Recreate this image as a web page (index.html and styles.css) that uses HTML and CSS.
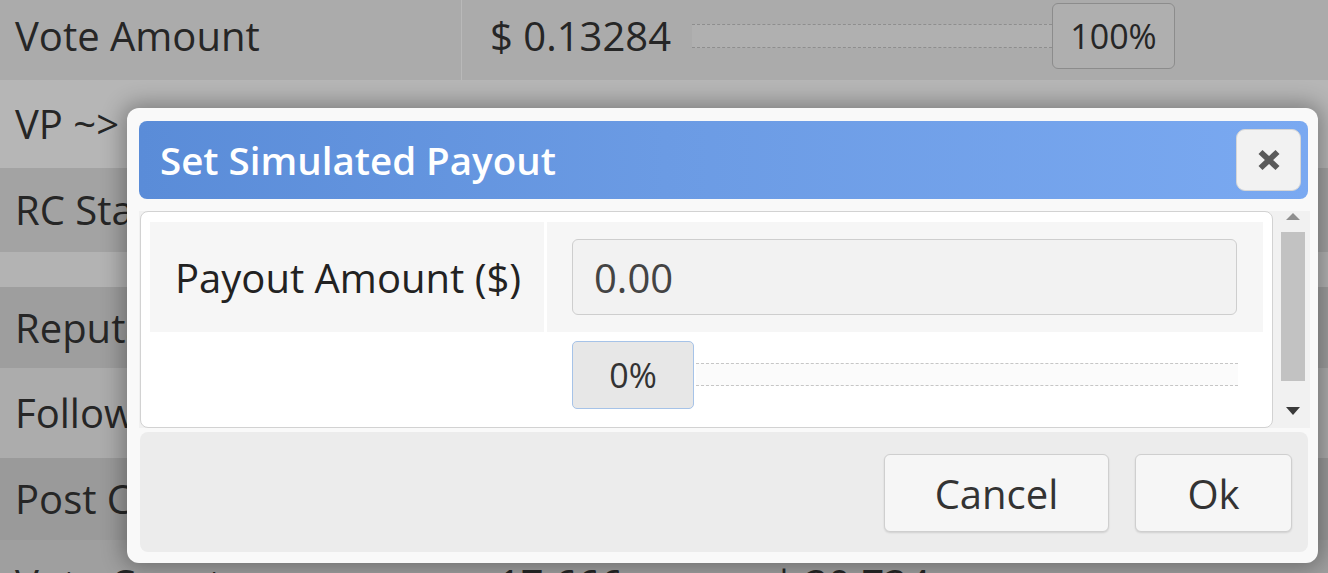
FILE: index.html
```html
<!DOCTYPE html>
<html lang="en">
<head>
<meta charset="utf-8">
<title>Set Simulated Payout</title>
<link rel="stylesheet" href="styles.css">
</head>
<body>
<div class="page">
  <div class="bg-table">
    <div class="row r1">
      <div class="lbl lbl-div">Vote Amount</div>
      <div class="val">
        <span class="amount">$ 0.13284</span>
        <div class="track track-dark"></div>
        <div class="pct pct-dark">100%</div>
      </div>
    </div>
    <div class="row r2"><div class="lbl">VP ~&gt;</div></div>
    <div class="row r3"><div class="lbl">RC Status</div></div>
    <div class="row r4"></div>
    <div class="row r5"><div class="lbl">Reputation</div></div>
    <div class="row r6"><div class="lbl">Followers</div></div>
    <div class="row r7"><div class="lbl">Post Count</div></div>
    <div class="row r8">
      <div class="lbl">Vote Count</div>
      <div class="val val-low">
        <span class="amount">17.666</span>
        <span class="amount amount-sep">| 30.734</span>
      </div>
    </div>
  </div>

  <div class="dialog">
    <div class="dlg-head">
      <span class="dlg-title">Set Simulated Payout</span>
      <button class="dlg-close" type="button" aria-label="Close">
        <svg width="24" height="22" viewBox="0 0 24 22">
          <path d="M3.5 3 L20.5 19 M20.5 3 L3.5 19" stroke="#5a5a5a" stroke-width="5.8" fill="none"/>
        </svg>
      </button>
    </div>
    <div class="dlg-body">
      <div class="dlg-content">
        <div class="form-grid">
          <div class="cell cell-label shaded">Payout Amount ($)</div>
          <div class="cell cell-input shaded"><div class="input">0.00</div></div>
          <div class="cell"></div>
          <div class="cell cell-slider">
            <div class="pct pct-light">0%</div>
            <div class="track track-light"></div>
          </div>
        </div>
      </div>
      <div class="scrollbar">
        <svg class="arrow-up" width="14" height="7" viewBox="0 0 14 7"><path d="M0 7 L7 0 L14 7 Z" fill="#8f8f8f"/></svg>
        <div class="thumb"></div>
        <svg class="arrow-down" width="14" height="8" viewBox="0 0 14 8"><path d="M0 0 L14 0 L7 8 Z" fill="#3a3a3a"/></svg>
      </div>
    </div>
    <div class="dlg-foot">
      <button class="btn btn-cancel" type="button">Cancel</button>
      <button class="btn btn-ok" type="button">Ok</button>
    </div>
  </div>
</div>
</body>
</html>
```

FILE: styles.css
```css
* { box-sizing: border-box; }

html, body {
  margin: 0;
  padding: 0;
  width: 1328px;
  height: 573px;
  overflow: hidden;
  background: #a4a4a4;
}

body {
  font-family: "Open Sans", "DejaVu Sans", sans-serif;
  color: #262626;
}

.page {
  position: relative;
  width: 1328px;
  height: 573px;
  overflow: hidden;
}

/* ---------- background table (dimmed by overlay) ---------- */
.bg-table {
  display: flex;
  flex-direction: column;
}

.row {
  display: flex;
  align-items: center;
  font-size: 40px;
  line-height: 52px;
}

.r1 { height: 80px; padding-bottom: 8px; background: #ababab; align-items: stretch; }
.r2 { height: 88px; background: #b6b6b6; }
.r3 { height: 84px; background: #a3a3a3; }
.r4 { height: 35px; background: #b3b3b3; }
.r5 { height: 81px; background: #9e9e9e; }
.r6 { height: 90px; background: #acacac; }
.r7 { height: 82px; background: #9a9a9a; }
.r8 { height: 80px; background: #9f9f9f; align-items: flex-start; padding-top: 18px; }

.lbl {
  width: 462px;
  flex: none;
  padding-left: 15px;
  white-space: nowrap;
  display: flex;
  align-items: center;
}

.lbl-div {
  border-right: 1px solid #b9b9b9;
  margin-bottom: -8px;
  padding-bottom: 8px;
}

.val {
  display: flex;
  align-items: center;
  padding-left: 28px;
}

.val-low { padding-left: 36px; }

.amount { white-space: nowrap; }
.amount-sep { margin-left: 150px; }

.track {
  border-top: 1px dashed #8e8e8e;
  border-bottom: 1px dashed #8e8e8e;
}

.track-dark {
  width: 360px;
  height: 24px;
  margin-left: 21px;
  background: #b0b0b0;
}

.pct {
  display: flex;
  align-items: center;
  justify-content: center;
  font-size: 34px;
  white-space: nowrap;
}

.pct-dark {
  width: 123px;
  height: 66px;
  border: 1px solid #8c8c8c;
  border-radius: 6px;
  background: #afafaf;
  color: #262626;
}

/* ---------- dialog ---------- */
.dialog {
  position: absolute;
  left: 127px;
  top: 108px;
  width: 1191px;
  height: 455px;
  padding: 13px 10px 11px 12px;
  background: #f9f9f9;
  border-radius: 12px;
  box-shadow: 0 0 22px 4px rgba(0, 0, 0, 0.32);
  display: flex;
  flex-direction: column;
}

.dlg-head {
  height: 78px;
  flex: none;
  border-radius: 8px;
  background: linear-gradient(90deg, #5a8cd8 0%, #6b9be4 45%, #7aa9f1 100%);
  display: flex;
  align-items: flex-start;
  justify-content: space-between;
  padding: 0 7px 0 21px;
}

.dlg-title {
  color: #ffffff;
  font-size: 38.5px;
  font-weight: 600;
  line-height: 52px;
  padding-top: 13px;
  white-space: nowrap;
}

.dlg-close {
  margin-top: 8px;
  width: 65px;
  height: 62px;
  border: 1px solid #d6d6d6;
  border-radius: 9px;
  background: #f2f2f2;
  display: flex;
  align-items: center;
  justify-content: center;
  padding: 0;
}

.dlg-body {
  margin-top: 12px;
  height: 217px;
  flex: none;
  display: flex;
  background: #f1f1f1;
  margin-right: -2px;
}

.dlg-content {
  width: 1133px;
  margin-left: 1px;
  background: #ffffff;
  border: 1px solid #d2d2d2;
  border-radius: 8px;
  padding: 10px 9px 9px 9px;
}

.form-grid {
  display: grid;
  grid-template-columns: 394px 1fr;
  grid-template-rows: 110px 86px;
  column-gap: 3px;
}

.cell { display: flex; align-items: center; }
.shaded { background: #f6f6f6; }

.cell-label {
  padding-left: 25px;
  font-size: 40px;
  color: #222222;
  white-space: nowrap;
}

.cell-input { padding: 0 26px 0 25px; }

.input {
  width: 100%;
  height: 76px;
  border: 1px solid #cecece;
  border-radius: 6px;
  background: #f2f2f2;
  font-size: 40px;
  color: #444444;
  padding-left: 21px;
  display: flex;
  align-items: center;
}

.cell-slider {
  padding: 9px 25px 0 25px;
  align-items: flex-start;
}

.pct-light {
  width: 122px;
  height: 68px;
  flex: none;
  border: 1px solid #a6c3e8;
  border-radius: 5px;
  background: #e7e7e7;
  color: #333333;
}

.track-light {
  flex: 1;
  height: 23px;
  margin-top: 22px;
  margin-left: 2px;
  background: #fbfbfb;
  border-top: 1px dashed #c6c6c6;
  border-bottom: 1px dashed #c6c6c6;
}

.scrollbar {
  width: 37px;
  display: flex;
  flex-direction: column;
  align-items: center;
  padding-top: 2px;
  padding-left: 2px;
}

.thumb {
  width: 24px;
  height: 149px;
  margin-top: 12px;
  background: #c2c2c2;
}

.arrow-down { margin-top: 26px; }

.dlg-foot {
  margin-top: 4px;
  height: 120px;
  flex: none;
  margin-left: 1px;
  background: #ececec;
  border-radius: 8px;
  display: flex;
  justify-content: flex-end;
  align-items: flex-start;
  gap: 26px;
  padding: 22px 16px 0 0;
}

.btn {
  height: 78px;
  border: 1px solid #cfcfcf;
  border-radius: 6px;
  background: #f6f6f6;
  box-shadow: 0 1px 2px rgba(0, 0, 0, 0.12);
  font-family: "Open Sans", "DejaVu Sans", sans-serif;
  font-size: 40px;
  color: #333333;
  padding: 0;
}

.btn-cancel { width: 225px; }
.btn-ok { width: 157px; }
```
